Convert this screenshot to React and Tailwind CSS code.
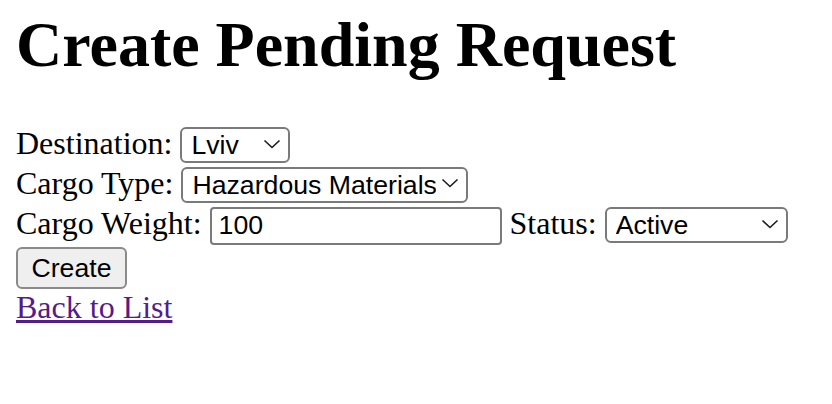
import { useState } from "react";

const Chevron = () => (
  <svg
    className="pointer-events-none absolute right-[9px] top-1/2 -translate-y-1/2"
    width="18"
    height="10"
    viewBox="0 0 18 10"
    fill="none"
  >
    <path d="M1.5 1.5 L9 8.5 L16.5 1.5" stroke="#1a1a1a" strokeWidth="1.6" />
  </svg>
);

const Select = ({ value, onChange, options, width }) => (
  <span className={`relative inline-block align-baseline ${width}`}>
    <select
      value={value}
      onChange={(e) => onChange(e.target.value)}
      className="h-[36px] w-full appearance-none rounded-[6px] border-2 border-[#7a7a7a] bg-white pl-[9px] pr-[30px] font-['Liberation_Sans',Arial,sans-serif] text-[26.67px] leading-[30px] text-black"
    >
      {options.map((o) => (
        <option key={o}>{o}</option>
      ))}
    </select>
    <Chevron />
  </span>
);

const App = () => {
  const [destination, setDestination] = useState("Lviv");
  const [cargoType, setCargoType] = useState("Hazardous Materials");
  const [weight, setWeight] = useState("100");
  const [status, setStatus] = useState("Active");

  return (
    <div className="min-h-[404px] bg-white px-[16px] font-['Liberation_Serif','Times_New_Roman',serif] text-[32px] text-black">
      <h1 className="mb-[42px] pt-[8px] text-[64px] font-bold leading-[74px]">
        Create Pending Request
      </h1>

      <form onSubmit={(e) => e.preventDefault()}>
        <div className="leading-[39px]">
          Destination:{" "}
          <Select
            value={destination}
            onChange={setDestination}
            options={["Lviv", "Kyiv", "Odesa"]}
            width="w-[110px]"
          />
        </div>
        <div className="leading-[40px]">
          Cargo Type:{" "}
          <Select
            value={cargoType}
            onChange={setCargoType}
            options={["Hazardous Materials", "General", "Perishable"]}
            width="w-[287px]"
          />
        </div>
        <div className="leading-[41px]">
          Cargo Weight:{" "}
          <input
            value={weight}
            onChange={(e) => setWeight(e.target.value)}
            className="h-[38px] w-[292px] rounded-[4px] border-2 border-[#7a7a7a] bg-white px-[7px] align-baseline font-['Liberation_Sans',Arial,sans-serif] text-[26.67px] text-black outline-none"
          />{" "}
          Status:{" "}
          <Select
            value={status}
            onChange={setStatus}
            options={["Active", "Inactive"]}
            width="w-[183px]"
          />
        </div>
        <div className="leading-[42px]">
          <button
            type="submit"
            className="h-[42px] w-[111px] rounded-[6px] border-2 border-[#8a8a8a] bg-[#efefef] align-baseline font-['Liberation_Sans',Arial,sans-serif] text-[26.67px] leading-[36px] text-black"
          >
            Create
          </button>
        </div>
      </form>
      <div className="leading-[37px]">
        <a href="#" className="text-[#551a8b] underline">
          Back to List
        </a>
      </div>
    </div>
  );
};

export default App;
